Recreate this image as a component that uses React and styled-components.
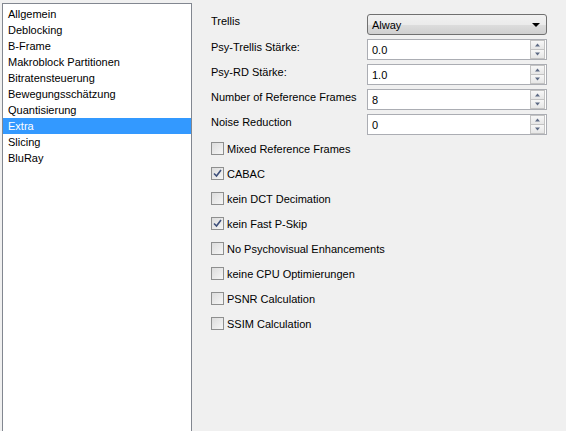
import styled, { createGlobalStyle } from "styled-components";

const Global = createGlobalStyle`
  html, body {
    margin: 0;
    padding: 0;
    background: #f0f0f0;
    font-family: Tahoma, "Liberation Sans", Arial, sans-serif;
    font-size: 11px;
    color: #000;
  }
`;

const Page = styled.div`
  display: flex;
  width: 566px;
  height: 431px;
  overflow: hidden;
`;

const List = styled.div`
  margin: 3px 0 0 2px;
  width: 190px;
  height: 440px;
  background: #fff;
  border: 1px solid #828790;
  border-bottom: none;
  padding-top: 2px;
  box-sizing: border-box;
`;

const ListItem = styled.div`
  height: 16px;
  line-height: 16px;
  padding-left: 5px;
  background: ${(p) => (p.$active ? "#3399ff" : "transparent")};
  color: ${(p) => (p.$active ? "#fff" : "#000")};
`;

const Form = styled.div`
  flex: 1;
  padding: 14px 0 0 19px;
  display: flex;
  flex-direction: column;
`;

const FieldRow = styled.div`
  display: flex;
  align-items: flex-start;
  height: 21px;
  margin-bottom: 4px;
`;

const Label = styled.div`
  width: 156px;
  line-height: 13px;
  padding-top: ${(p) => p.$top || 0}px;
`;

const Combo = styled.div`
  width: 180px;
  height: 21px;
  box-sizing: border-box;
  border: 1px solid #707070;
  border-radius: 3px;
  background: linear-gradient(#f2f2f2, #ebebeb 50%, #dddddd 51%, #cfcfcf);
  display: flex;
  align-items: center;
  justify-content: space-between;
  padding: 0 6px 0 4px;
`;

const Spin = styled.div`
  width: 180px;
  height: 21px;
  box-sizing: border-box;
  border: 1px solid #abadb3;
  background: #fff;
  display: flex;
  align-items: center;
  justify-content: space-between;
  padding-left: 4px;
`;

const SpinButtons = styled.div`
  width: 15px;
  height: 19px;
  display: flex;
  flex-direction: column;
  box-sizing: border-box;
  margin-right: 1px;
`;

const SpinButton = styled.div`
  flex: 1;
  border: 1px solid #c3c3c3;
  background: linear-gradient(#f7f7f7, #e6e6e6);
  display: flex;
  align-items: center;
  justify-content: center;
  & + & {
    border-top: none;
  }
`;

const CheckList = styled.div`
  display: flex;
  flex-direction: column;
  gap: 12px;
  margin-top: 3px;
`;

const CheckRow = styled.label`
  display: flex;
  align-items: center;
  gap: 3px;
  height: 13px;
`;

const Box = styled.span`
  width: 13px;
  height: 13px;
  box-sizing: border-box;
  border: 1px solid #8e8f8f;
  background: linear-gradient(135deg, #dcdcdc, #f6f6f6);
  display: inline-flex;
  align-items: center;
  justify-content: center;
`;

const Arrow = ({ up, size = 7 }) => (
  <svg width={size} height={4} viewBox="0 0 7 4">
    <path d={up ? "M0 4 L3.5 0 L7 4 Z" : "M0 0 L7 0 L3.5 4 Z"} fill="#5d6a84" />
  </svg>
);

const SpinBox = ({ value }) => (
  <Spin>
    <span>{value}</span>
    <SpinButtons>
      <SpinButton>
        <Arrow up size={5} />
      </SpinButton>
      <SpinButton>
        <Arrow size={5} />
      </SpinButton>
    </SpinButtons>
  </Spin>
);

const Check = ({ checked, label }) => (
  <CheckRow>
    <Box>
      {checked && (
        <svg width="9" height="9" viewBox="0 0 9 9">
          <path d="M1 4.5 L3.5 7 L8 1" stroke="#3d4f7a" strokeWidth="1.6" fill="none" />
        </svg>
      )}
    </Box>
    <span>{label}</span>
  </CheckRow>
);

const items = [
  "Allgemein",
  "Deblocking",
  "B-Frame",
  "Makroblock Partitionen",
  "Bitratensteuerung",
  "Bewegungsschätzung",
  "Quantisierung",
  "Extra",
  "Slicing",
  "BluRay",
];

const checks = [
  ["Mixed Reference Frames", false],
  ["CABAC", true],
  ["kein DCT Decimation", false],
  ["kein Fast P-Skip", true],
  ["No Psychovisual Enhancements", false],
  ["keine CPU Optimierungen", false],
  ["PSNR Calculation", false],
  ["SSIM Calculation", false],
];

export default function App() {
  return (
    <>
      <Global />
      <Page>
        <List>
          {items.map((it) => (
            <ListItem key={it} $active={it === "Extra"}>
              {it}
            </ListItem>
          ))}
        </List>
        <Form>
          <FieldRow>
            <Label $top={1}>Trellis</Label>
            <Combo>
              <span>Alway</span>
              <svg width="8" height="4" viewBox="0 0 8 4">
                <path d="M0 0 L8 0 L4 4 Z" fill="#000" />
              </svg>
            </Combo>
          </FieldRow>
          <FieldRow>
            <Label $top={2}>Psy-Trellis Stärke:</Label>
            <SpinBox value="0.0" />
          </FieldRow>
          <FieldRow>
            <Label $top={2}>Psy-RD Stärke:</Label>
            <SpinBox value="1.0" />
          </FieldRow>
          <FieldRow>
            <Label $top={2}>Number of Reference Frames</Label>
            <SpinBox value="8" />
          </FieldRow>
          <FieldRow>
            <Label $top={2}>Noise Reduction</Label>
            <SpinBox value="0" />
          </FieldRow>
          <CheckList>
            {checks.map(([l, c]) => (
              <Check key={l} label={l} checked={c} />
            ))}
          </CheckList>
        </Form>
      </Page>
    </>
  );
}
